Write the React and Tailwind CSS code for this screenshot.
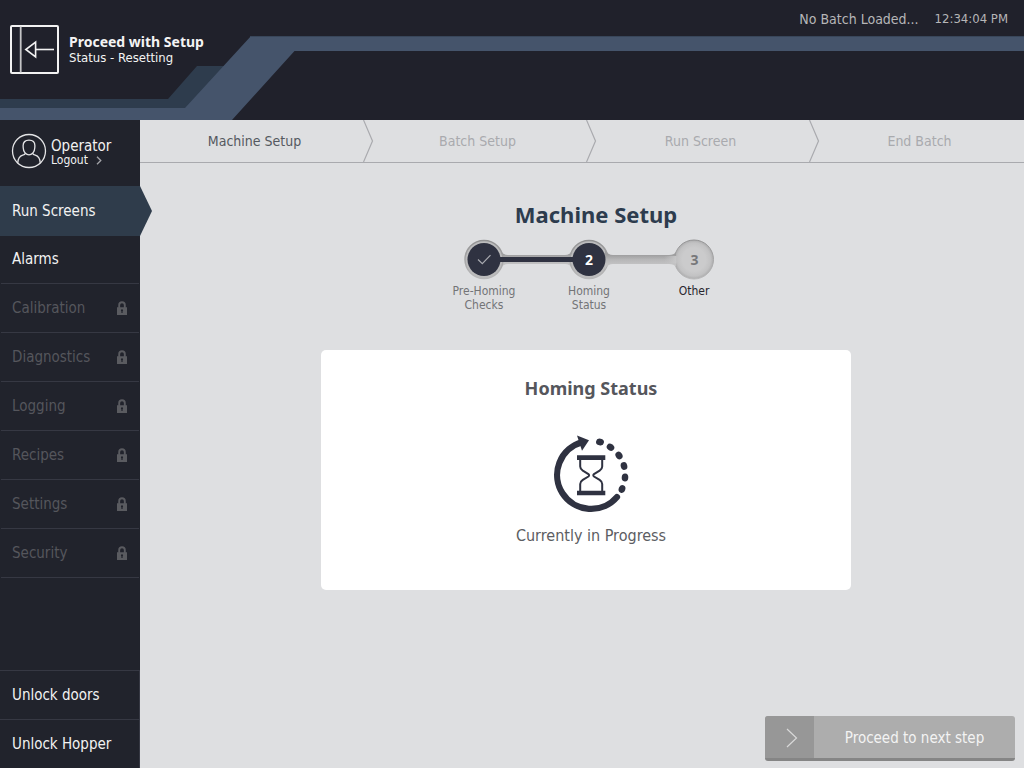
const tabs = ["Machine Setup", "Batch Setup", "Run Screen", "End Batch"];

const lockedItems = ["Calibration", "Diagnostics", "Logging", "Recipes", "Settings", "Security"];

function SetupIcon() {
  return (
    <svg width="49" height="49" viewBox="0 0 49 49" fill="none" stroke="#f2f2f2" aria-hidden="true">
      <rect x="1" y="1" width="47" height="47" rx="1" strokeWidth="2" />
      <path d="M10.7 1.5v46" strokeWidth="1.8" stroke="#c4c4c6" />
      <path d="M25.500 24.500h18.500" strokeWidth="1.600" />
      <path d="M25.600 17v15L15.800 24.500z" strokeWidth="1.600" />
    </svg>
  );
}

function UserIcon() {
  return (
    <svg width="36" height="36" viewBox="0 0 36 36" fill="none" stroke="#e4e4e6" strokeWidth="1.3" aria-hidden="true">
      <circle cx="18" cy="18" r="16.5" />
      <path d="M18 7.200c3.800 0 5.900 2.200 5.900 5.500 0 3.700-.7 6-2.300 7.500-1.900 2.100-5.300 2.100-7.200 0-1.600-1.500-2.300-3.800-2.300-7.500 0-3.300 2.100-5.500 5.900-5.500z" />
      <path d="M14.400 20.200c-.4 1.200-1.300 1.600-2.700 2-3.300 1-4.800 4-5 8M21.600 20.200c.4 1.200 1.300 1.600 2.700 2 3.300 1 4.800 4 5 8" />
    </svg>
  );
}

function LockIcon() {
  return (
    <svg width="10" height="14" viewBox="0 0 10 14" aria-hidden="true">
      <path d="M2.200 7V4a2.800 2.800 0 0 1 5.600 0v3" fill="none" stroke="#5a5b60" strokeWidth="1.900" />
      <path fill="#5a5b60" fillRule="evenodd" d="M0 6.300h10V14H0zM5 8.300a1.100 1.100 0 0 0-.6 2V12h1.200v-1.700a1.100 1.100 0 0 0-.6-2z" />
    </svg>
  );
}

function ProgressIcon() {
  const dots = [
    [49, 8, 12],
    [59.5, 13.2, 35],
    [68, 21.500, 55],
    [73, 32, 75],
    [74, 43.500, 94],
    [71, 55, 110],
  ];
  return (
    <svg width="80" height="80" viewBox="0 0 80 80" fill="#2f3241" aria-hidden="true">
      <path d="M31 8.200A34 34 0 1 0 66 63" fill="none" stroke="#2f3241" strokeWidth="6.200" strokeLinecap="round" />
      <path d="M26 1.500 38 6.300 31 16.800z" />
      {dots.map(([x, y, angle]) => (
        <ellipse key={angle} cx={x} cy={y} rx="4" ry="3.300" transform={`rotate(${angle} ${x} ${y})`} />
      ))}
      <path d="M26 21.300h28.300v4.600H26zM26 56.700h28.300v4.600H26z" />
      <path
        d="M29.200 25v7.500c0 2 .8 3 2.600 4.200l5.600 3.400q1.400 1.200 0 2.400l-5.600 3.400c-1.800 1.200-2.600 2.200-2.600 4.200V57M51.200 25v7.500c0 2-.8 3-2.600 4.200L43 40.100q-1.400 1.200 0 2.400l5.600 3.400c1.800 1.200 2.600 2.200 2.600 4.200V57"
        fill="none"
        stroke="#2f3241"
        strokeWidth="2"
      />
    </svg>
  );
}

function StepTrack() {
  return (
    <svg width="251" height="41" viewBox="0 0 251 41" aria-hidden="true">
      <defs>
        <linearGradient id="groove" x1="0" y1="0" x2="0" y2="1">
          <stop offset="0" stopColor="#929293" />
          <stop offset="1" stopColor="#b9b9ba" />
        </linearGradient>
        <linearGradient id="bar" x1="0" y1="0" x2="0" y2="1">
          <stop offset="0.250" stopColor="#9d9d9e" />
          <stop offset="0.500" stopColor="#b6b6b7" />
          <stop offset="0.750" stopColor="#c2c2c3" />
        </linearGradient>
        <linearGradient id="mouth" x1="0" y1="0" x2="1" y2="0">
          <stop offset="0" stopColor="#c2c2c3" stopOpacity="0" />
          <stop offset="1" stopColor="#c8c8c9" />
        </linearGradient>
        <radialGradient id="open">
          <stop offset="0.600" stopColor="#cbcbcc" />
          <stop offset="0.850" stopColor="#c2c2c3" />
          <stop offset="1" stopColor="#adadae" />
        </radialGradient>
      </defs>
      <path d="M36 11q3 5 8 5h57q5 0 8-5v19q-3-5-8-5H44q-5 0-8 5z" fill="url(#bar)" />
      <circle cx="20" cy="20.500" r="19" fill="#bcbcbd" stroke="url(#groove)" strokeWidth="1.500" />
      <circle cx="125" cy="20.500" r="19" fill="#bcbcbd" stroke="url(#groove)" strokeWidth="1.500" />
      <circle cx="230" cy="20.500" r="19.500" fill="url(#open)" stroke="url(#groove)" strokeWidth="1" />
      <path d="M141 11q3 5 8 5h56q5 0 7-3v15q-2-3-7-3h-56q-5 0-8 5z" fill="url(#bar)" />
      <path d="M200 17h12.500v7.500H200z" fill="url(#mouth)" />
      <path d="M30 18h85v5H30z" fill="#2f3241" />
      <circle cx="20" cy="20.500" r="16.500" fill="#2f3241" />
      <circle cx="125" cy="20.500" r="16.500" fill="#2f3241" />
      <path d="M14 20.500l4.300 4.200 8.200-8.500" fill="none" stroke="#a9aab0" strokeWidth="1.200" />
    </svg>
  );
}

function HeaderBands() {
  return (
    <svg className="absolute inset-0 h-full w-full" aria-hidden="true">
      <path d="M0 99H168L197 66H226L188 109H0z" fill="#2e3c4d" />
      <path d="M0 108H185L251 36H6000V51H294.500L232 120H0z" fill="#45546b" />
      <path d="M250 36.500H6000" stroke="#38465a" />
    </svg>
  );
}

function Header() {
  return (
    <header className="relative h-[120px] bg-[#20212b]">
      <HeaderBands />
      <div className="relative flex items-start justify-between">
        <div className="flex items-center gap-2.5 pt-[25px] pl-2.5 text-[#f4f4f4]">
          <SetupIcon />
          <div className="pt-px">
            <p className="font-['Noto_Sans',sans-serif] text-sm leading-4 font-bold">Proceed with Setup</p>
            <p className="text-[13px] leading-4">Status - Resetting</p>
          </div>
        </div>
        <div className="flex items-center gap-4 pt-[9px] pr-4 text-[#b6b6b8]">
          <p className="text-sm leading-5">No Batch Loaded...</p>
          <time className="text-[13px] leading-5">12:34:04 PM</time>
        </div>
      </div>
    </header>
  );
}

function Sidebar() {
  return (
    <aside className="flex w-[140px] shrink-0 flex-col bg-[#21232c] text-[15px] text-[#f2f2f2]">
      <div className="flex h-[66px] items-center gap-1 pb-1 pl-[11px]">
        <UserIcon />
        <div className="pt-0.5">
          <p className="leading-4">Operator</p>
          <a href="#logout" className="flex items-center gap-2 text-xs leading-3">
            Logout
            <svg width="6" height="9" viewBox="0 0 6 9" fill="none" stroke="#a3a3a8" strokeWidth="1.300" aria-hidden="true">
              <path d="M1 .7l3.800 3.800L1 8.300" />
            </svg>
          </a>
        </div>
      </div>
      <nav>
        <a href="#run" aria-current="page" className="relative flex h-[50px] items-center bg-[#2f3c4b] pl-3">
          Run Screens
          <svg className="absolute top-0 left-full" width="12" height="50" viewBox="0 0 12 50" aria-hidden="true">
            <path d="M0 0 12 25 0 50z" fill="#2f3c4b" />
          </svg>
        </a>
        <a href="#alarms" className="mx-px flex h-12 items-center border-b border-[#363843] pl-[11px]">
          Alarms
        </a>
        {lockedItems.map((item) => (
          <button
            key={item}
            type="button"
            disabled
            className="mx-px flex h-[49px] w-[138px] items-center justify-between border-b border-[#363843] pr-3 pl-[11px] text-[#55565c]"
          >
            {item}
            <LockIcon />
          </button>
        ))}
      </nav>
      <div className="mt-auto flex flex-col border-r border-[#363843]">
        <button type="button" className="h-[49px] border-t border-[#363843] pl-3 text-left">
          Unlock doors
        </button>
        <button type="button" className="h-[49px] border-t border-[#363843] pl-3 text-left">
          Unlock Hopper
        </button>
      </div>
    </aside>
  );
}

function StageTabs() {
  return (
    <nav className="grid h-[43px] grid-cols-[223fr_223fr_223fr_215fr] border-b border-[#a9aaae] text-sm">
      {tabs.map((tab, i) => (
        <a
          key={tab}
          href="#stage"
          className={`relative flex items-center justify-center pl-1.5 ${i === 0 ? "text-[#555960]" : "text-[#a9aaae]"}`}
        >
          {tab}
          {i < tabs.length - 1 && (
            <svg className="absolute top-0 left-full" width="11" height="42" viewBox="0 0 11 42" fill="none" aria-hidden="true">
              <path d="M.5 0 9.500 21 .5 42" stroke="#a9aaae" strokeWidth="1.200" />
            </svg>
          )}
        </a>
      ))}
    </nav>
  );
}

function Stepper() {
  return (
    <div className="mt-2 ml-1.5 grid w-[315px] justify-items-center">
      <div className="relative">
        <StepTrack />
        <div className="absolute inset-0 flex items-center justify-center font-['Noto_Sans',sans-serif] text-sm font-bold">
          <span className="text-white">2</span>
          <span className="absolute right-0 w-10 text-center text-[#77777a]">3</span>
        </div>
      </div>
      <ol className="mt-1 grid w-full grid-cols-3 text-center text-xs leading-[14px] text-[#737477]">
        <li>
          Pre-Homing
          <br />
          Checks
        </li>
        <li aria-current="step">
          Homing
          <br />
          Status
        </li>
        <li className="text-[#26262d]">Other</li>
      </ol>
    </div>
  );
}

export default function App() {
  return (
    <div className="flex min-h-screen flex-col bg-[#dedfe1] font-['DejaVu_Sans_Condensed','DejaVu_Sans',sans-serif]">
      <Header />
      <div className="flex flex-1">
        <Sidebar />
        <main className="flex flex-1 flex-col">
          <StageTabs />
          <section className="flex flex-col items-center pt-[35px] pl-2">
            <h1 className="mb-px pl-5 font-['Noto_Sans',sans-serif] text-[22px] leading-8 font-bold text-[#2d3c4e]">Machine Setup</h1>
            <Stepper />
            <div className="mt-[38px] flex h-60 w-full max-w-[530px] flex-col items-center rounded-[5px] bg-white pt-[25px] pl-2.5">
              <h2 className="font-['Noto_Sans',sans-serif] text-lg leading-[26px] font-bold text-[#55565c]">Homing Status</h2>
              <div className="mt-[33px]">
                <ProgressIcon />
              </div>
              <p className="mt-2.5 text-base leading-6 text-[#5c5d62]">Currently in Progress</p>
            </div>
          </section>
          <button
            type="button"
            disabled
            className="mt-auto mr-[9px] mb-[7px] flex h-[45px] w-[250px] self-end overflow-hidden rounded-[3px] border-b-[3px] border-[#858585] bg-[#adadad] text-[15px] text-[#f3f3f3]"
          >
            <span className="flex h-full w-[49px] items-center justify-center bg-[#979797] pt-0.5 pl-1">
              <svg width="12" height="20" viewBox="0 0 12 20" fill="none" stroke="#d8d8d8" strokeWidth="1.200" aria-hidden="true">
                <path d="M1 1l9.500 9L1 19" />
              </svg>
            </span>
            <span className="flex h-full flex-1 items-center justify-center pt-0.5">Proceed to next step</span>
          </button>
        </main>
      </div>
    </div>
  );
}
